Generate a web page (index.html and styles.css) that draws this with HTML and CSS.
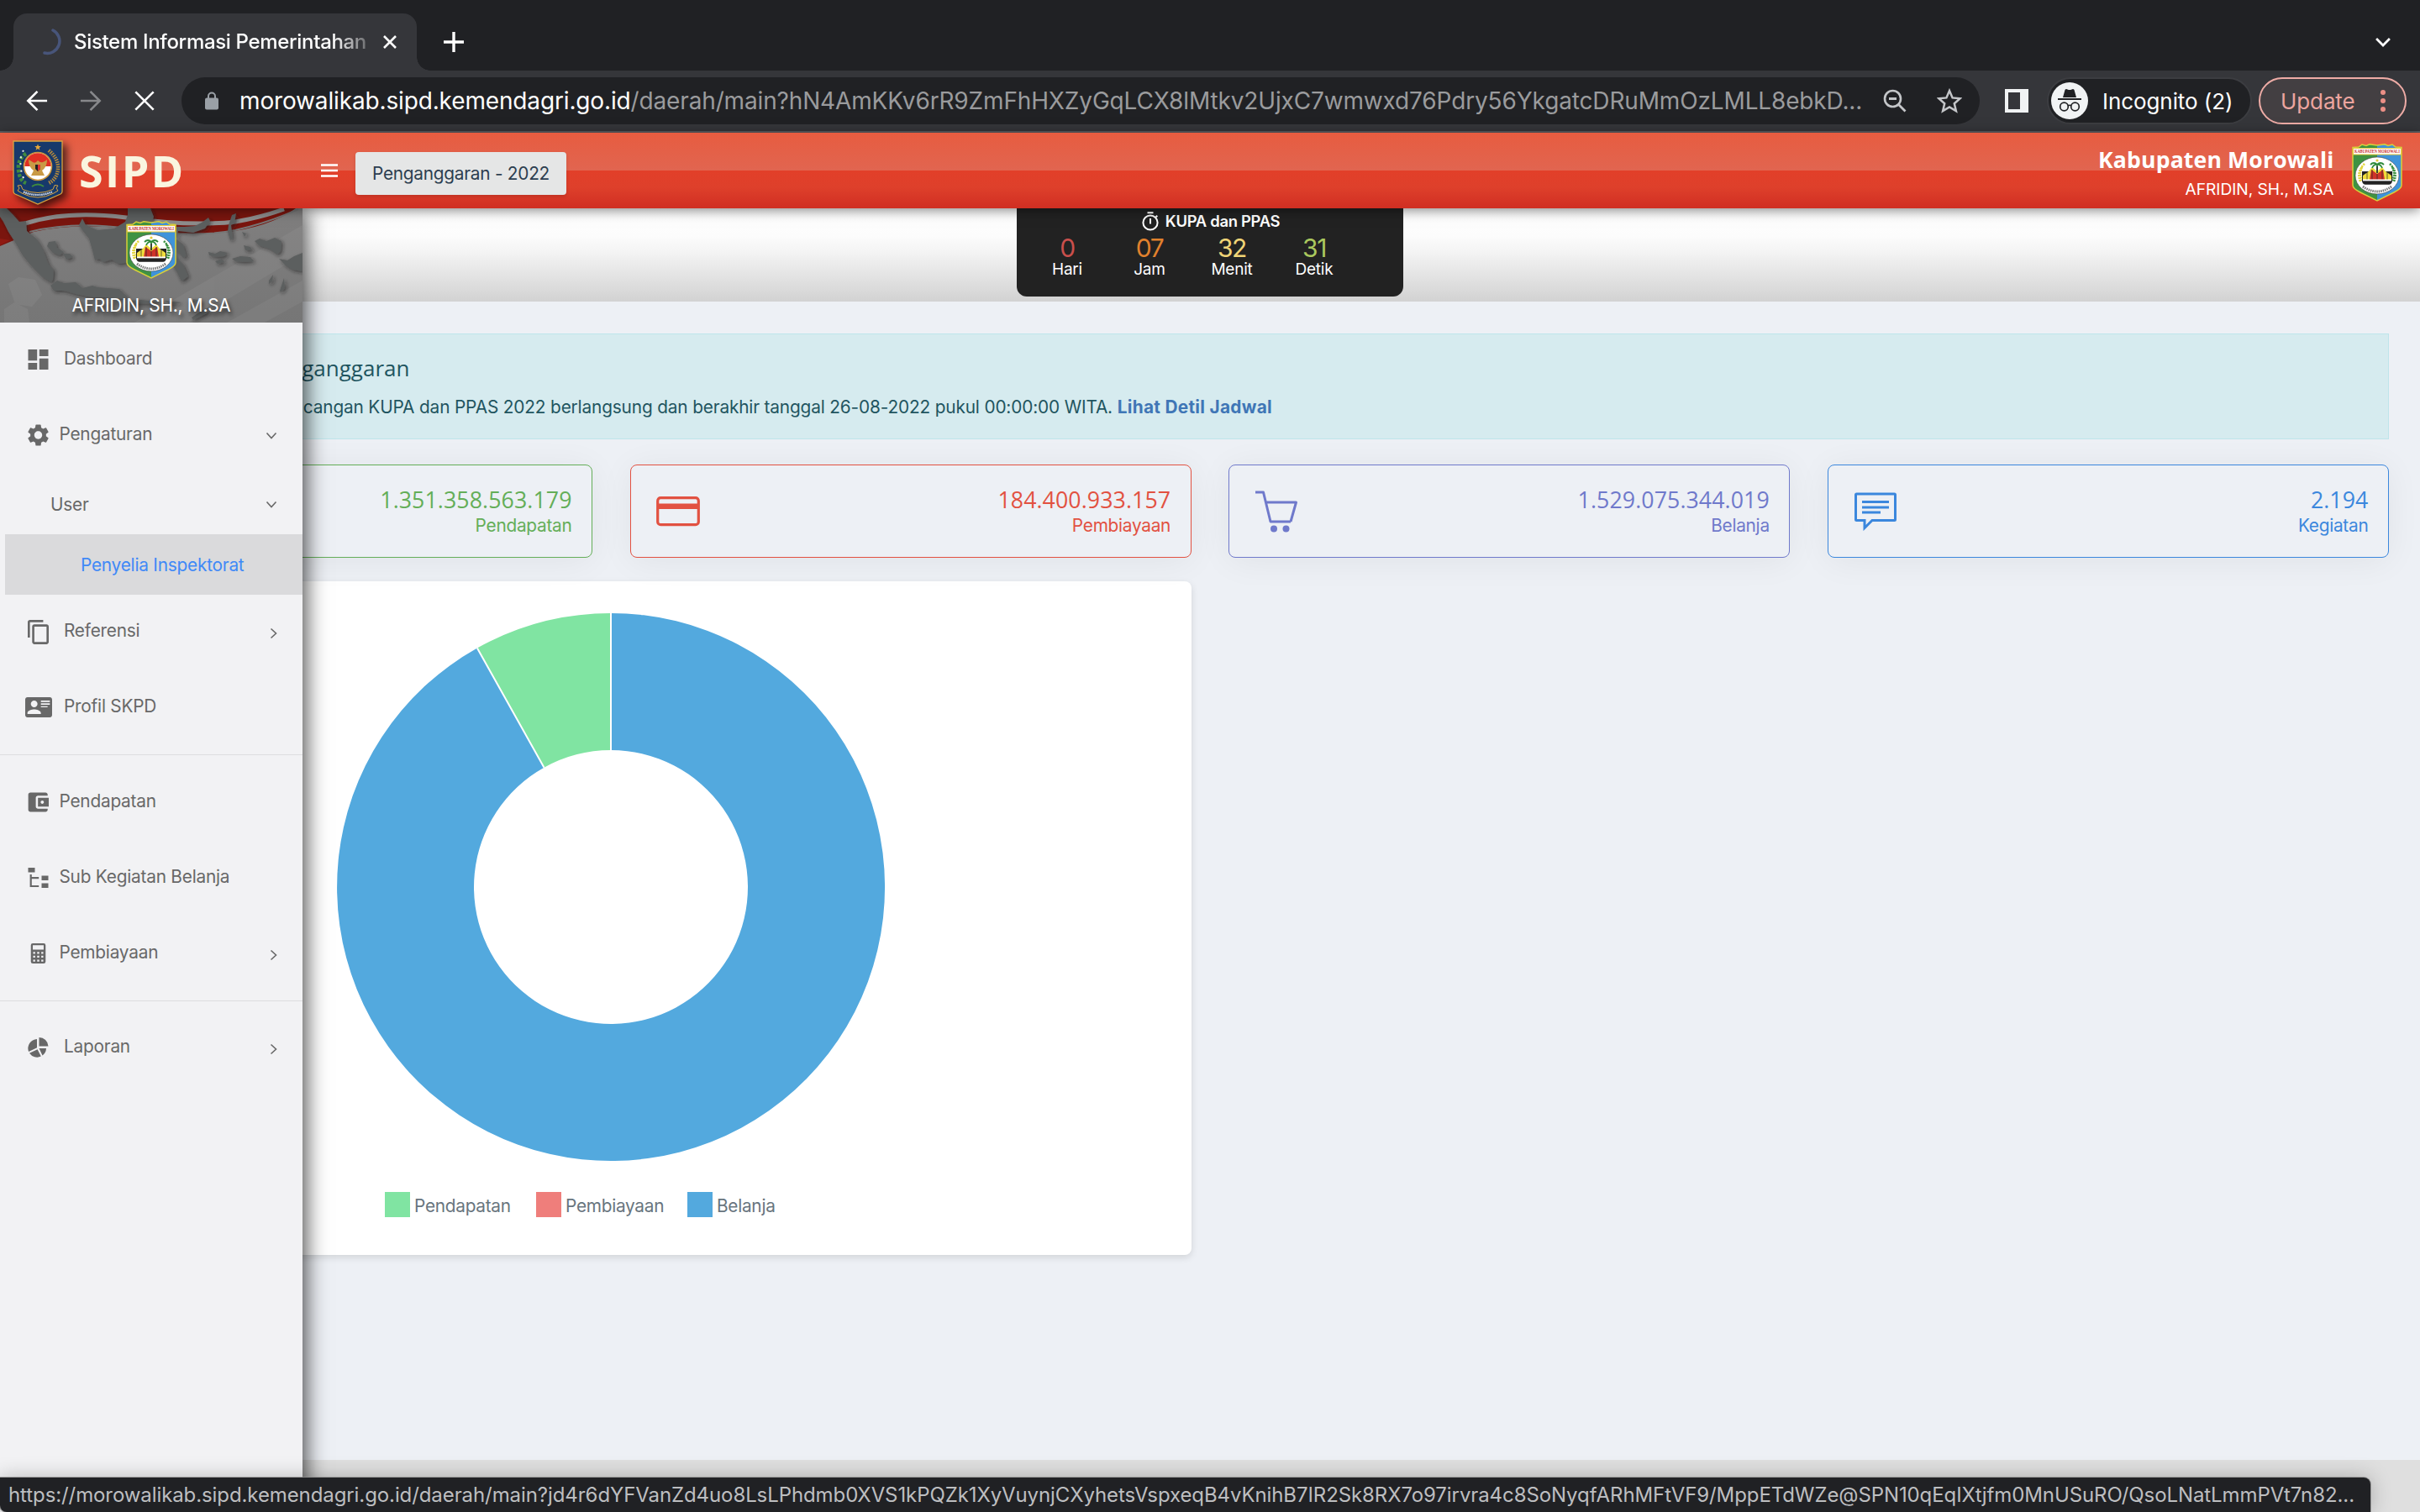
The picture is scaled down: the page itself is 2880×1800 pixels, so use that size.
FILE: index.html
```html
<!DOCTYPE html>
<html lang="id">
<head>
<meta charset="utf-8">
<title>Sistem Informasi Pemerintahan</title>
<link rel="stylesheet" href="styles.css">
</head>
<body>
<svg class="defs" aria-hidden="true">
  <symbol id="crest" viewBox="0 0 60 69">
    <path d="M1 4.500 8 4l4-3 5 1.500 4-1.800 9 1.300 9-1.300 4 1.800 5-1.500 4 3 7 .5v45c0 3-4 6-9 8.500L30 68 10 58C5 55.500 1 52.500 1 49.500z" fill="#3f9243"/>
    <path d="M30 2l9-1.300 4 1.800 5-1.500 4 3 7 .5v45c0 3-4 6-9 8.500L30 68z" fill="#3f93da"/>
    <path d="M1 4.500 8 4l4-3 5 1.500 4-1.800 9 1.300 9-1.300 4 1.800 5-1.500 4 3 7 .5v45c0 3-4 6-9 8.500L30 68 10 58C5 55.500 1 52.500 1 49.500z" fill="none" stroke="#d8cf3a" stroke-width="1.500"/>
    <path d="M1.500 5.500h57V13h-57z" fill="#fff" stroke="#e9c93a"/>
    <text x="30" y="11.300" text-anchor="middle" textLength="54" lengthAdjust="spacingAndGlyphs" font-family="Liberation Serif, serif" font-weight="700" font-size="5.600" fill="#c8302c">KABUPATEN MOROWALI</text>
    <ellipse cx="30" cy="38" rx="26" ry="22" fill="#fff" stroke="#444" stroke-width=".6"/>
    <path d="M15 24q-10 10-5 21M12 28q-4 8 0 16" fill="none" stroke="#e2d53b" stroke-width="2.500" stroke-dasharray="2 1"/>
    <path d="M45 24q10 10 5 21M48 28q4 8 0 16" fill="none" stroke="#3f9243" stroke-width="2.500" stroke-dasharray="2 1"/>
    <path d="M12 33h36v12H12z" fill="#222"/>
    <path d="M13 43v-5l7-5 4-5 6 5 6-5 4 5 7 5v5z" fill="#f0dc3c"/>
    <path d="M21 43l2-12 3 2 4 3 4-3 3-2 2 12z" fill="#cf3328"/>
    <path d="M18 33v10M24 31v12M30 36v7M36 31v12M42 33v10" stroke="#222" stroke-width=".7"/>
    <path d="M13 42.500h34v2H13z" fill="#fff"/>
    <path d="M12 44.800h36q-1 4-4 4H16q-3 0-4-4z" fill="#222"/>
    <path d="M30 35V24M30 25q-4-4-8 0M30 25q4-4 8 0M30 25q-4-1-6 4M30 25q4-1 6 4" fill="none" stroke="#2f8a3a" stroke-width="1.800"/>
    <path d="M30 35V27" stroke="#333" stroke-width="1.600"/>
    <circle cx="30" cy="20" r="1.600" fill="#e2c93b"/>
    <path d="M13 51q17 12 34 0" fill="none" stroke="#777" stroke-width="3" stroke-dasharray="1.500 1"/>
  </symbol>
  <symbol id="chev-down" viewBox="0 0 14 10"><path d="M1.500 1.500 7 7.500l5.500-6" fill="none" stroke="currentColor" stroke-width="1.600"/></symbol>
  <symbol id="chev-right" viewBox="0 0 10 14"><path d="M1.500 1.500 7.500 7l-6 5.500" fill="none" stroke="currentColor" stroke-width="1.600"/></symbol>
</svg>

<div class="tabstrip">
  <div class="tab">
    <svg class="spinner" viewBox="0 0 32 32"><path d="M17 2A14.500 14.500 0 0 1 7 29" fill="none" stroke="#48557a" stroke-width="3.500" stroke-linecap="round"/></svg>
    <span class="tab-title">Sistem Informasi Pemerintahan</span>
    <svg class="tab-close" viewBox="0 0 16 16"><path d="M1 1l14 14M15 1 1 15" stroke="#fff" stroke-width="2.600"/></svg>
  </div>
  <svg class="new-tab" viewBox="0 0 24 24"><path d="M12 0v24M0 12h24" stroke="#fff" stroke-width="3.400"/></svg>
  <svg class="tab-menu" viewBox="0 0 26 16"><path d="M1.500 1.500 13 13 24.500 1.500" fill="none" stroke="#fff" stroke-width="4"/></svg>
</div>

<div class="toolbar">
  <svg class="nav" viewBox="0 0 28 28"><path d="M27 14H3M14.500 2 2.500 14l12 12" fill="none" stroke="#fff" stroke-width="2.800"/></svg>
  <svg class="nav" viewBox="0 0 28 28"><path d="M1 14h24M13.500 2l12 12-12 12" fill="none" stroke="#87888b" stroke-width="2.800"/></svg>
  <svg class="nav" viewBox="0 0 28 28"><path d="M2.500 2.500l23 23M25.500 2.500l-23 23" stroke="#fff" stroke-width="2.800"/></svg>
  <div class="omnibox">
    <svg class="lock" viewBox="0 0 16 22"><path d="M4 9V5.500a4 4 0 0 1 8 0V9" fill="none" stroke="#9aa0a6" stroke-width="2"/><rect y="7.500" width="16" height="14" rx="2" fill="#9aa0a6"/></svg>
    <span class="url"><span class="host">morowalikab.sipd.kemendagri.go.id</span>/daerah/main?hN4AmKKv6rR9ZmFhHXZyGqLCX8lMtkv2UjxC7wmwxd76Pdry56YkgatcDRuMmOzLMLL8ebkD...</span>
    <svg class="mag" viewBox="0 0 28 28"><circle cx="11.500" cy="11.500" r="9.500" fill="none" stroke="#c4c6c9" stroke-width="2.600"/><path d="M18.500 18.500l8 8M7 11.500h9" stroke="#c4c6c9" stroke-width="2.800"/></svg>
    <svg class="star" viewBox="0 0 30 30"><path d="M15 3l3.600 8.400 9.100.8-6.900 6 2.100 8.900L15 22.400l-7.900 4.700 2.100-8.900-6.900-6 9.100-.8z" fill="none" stroke="#c4c6c9" stroke-width="2.500"/></svg>
  </div>
  <svg class="panel" viewBox="0 0 28 28"><path d="M0 0h28v28H0zM4 4v20h14V4z" fill="#f1f3f4" fill-rule="evenodd"/></svg>
  <div class="incognito">
    <svg viewBox="0 0 44 44"><circle cx="22" cy="22" r="22" fill="#f1f3f4"/><path d="M16.500 9q1-1.500 3-.5 2.500 1 5 0 2-1 3 .5L30 18H14z" fill="#202124"/><path d="M8 20h28" stroke="#202124" stroke-width="2"/><g fill="none" stroke="#202124" stroke-width="1.700"><circle cx="15.500" cy="29" r="4.800"/><circle cx="28.500" cy="29" r="4.800"/><path d="M20 28q2-1.500 4 0"/></g></svg>
    <span>Incognito (2)</span>
  </div>
  <div class="update">
    <span>Update</span>
    <svg viewBox="0 0 6 28"><circle cx="3" cy="4" r="3"/><circle cx="3" cy="14" r="3"/><circle cx="3" cy="24" r="3"/></svg>
  </div>
</div>

<header class="appbar">
  <svg class="emblem" viewBox="0 0 60 77">
    <path d="M1 1h58v60q0 2-2 3L30 76 3 64q-2-1-2-3z" fill="#17396b" stroke="#d9a441" stroke-width="1.300"/>
    <path d="M30 4.500l1 2.600h2.800l-2.200 1.800.8 2.800L30 10l-2.400 1.700.8-2.800-2.200-1.800H29z" fill="#e5a93a"/>
    <path d="M16 16Q6 22 7 35t9 16" fill="none" stroke="#3f8a3f" stroke-width="4.500" stroke-dasharray="3.500 2"/>
    <path d="M13 12q-5 8-3 22 1 10 6 15" fill="none" stroke="#e9eee9" stroke-width="2" stroke-dasharray="2 6"/>
    <path d="M43 12q12 10 11 22T43 51" fill="none" stroke="#b58a3c" stroke-width="4.500" stroke-dasharray="1.600 1.200"/>
    <circle cx="30" cy="31" r="16.500" fill="#fff" stroke="#c9973e" stroke-width="1.600"/>
    <path d="M14.300 31a15.700 15.700 0 0 1 31.400 0z" fill="#e02f24"/>
    <path d="M30 24q-3 4-6 2t-5-3q0 9 6 13l-3 6h16l-3-6q6-4 6-13-2 2-5 3t-6-2z" fill="#c99a45"/>
    <path d="M27 29h6v5l-3 3-3-3z" fill="#222"/><path d="M30 29h3v5l-3 3z" fill="#d33"/>
    <path d="M23 55q7-5 14 0" fill="none" stroke="#3f8a3f" stroke-width="2"/>
    <path d="M6 54l4-.5 2 5q18 8 36 0l2-5 4 .5-2 3 2 3-5 3q-19 10-38 0l-5-3 2-3z" fill="#17396b" stroke="#d9a441"/>
    <path d="M13 61.500q17 7 34 0" fill="none" stroke="#dfe5ee" stroke-width="2.200" stroke-dasharray="1.600 .8"/>
  </svg>
  <span class="brand">SIPD</span>
  <svg class="burger" viewBox="0 0 20 16"><path d="M0 1.500h20M0 8h20M0 14.500h20" stroke="#fff" stroke-width="2.400"/></svg>
  <button class="year" type="button">Penganggaran - 2022</button>
  <div class="who">
    <div class="region">Kabupaten Morowali</div>
    <div class="person">AFRIDIN, SH., M.SA</div>
  </div>
  <svg class="crest-top"><use href="#crest"/></svg>
</header>

<div class="page">
  <div class="subbar">
    <div class="countdown">
      <div class="cd-title">
        <svg viewBox="0 0 20 23"><path d="M6.500 1.200h7" stroke="#fff" stroke-width="2.200"/><circle cx="10" cy="13" r="8.600" fill="none" stroke="#fff" stroke-width="2"/><path d="M10 8v6.500M16.500 6.500l1.800-1.800" stroke="#fff" stroke-width="2"/></svg>
        <span>KUPA dan PPAS</span>
      </div>
      <div class="cd-grid">
        <div class="cd days"><b>0</b><span>Hari</span></div>
        <div class="cd hours"><b>07</b><span>Jam</span></div>
        <div class="cd mins"><b>32</b><span>Menit</span></div>
        <div class="cd secs"><b>31</b><span>Detik</span></div>
      </div>
    </div>
  </div>

  <main class="content">
    <section class="alert">
      <h4>Penganggaran</h4>
      <p>Rancangan KUPA dan PPAS 2022 berlangsung dan berakhir tanggal 26-08-2022 pukul 00:00:00 WITA. <a>Lihat Detil Jadwal</a></p>
    </section>
    <section class="stats">
      <article class="stat green"><span></span><div><strong>1.351.358.563.179</strong><small>Pendapatan</small></div></article>
      <article class="stat red">
        <svg width="52" height="36" viewBox="0 0 52 36"><rect x="1.700" y="1.700" width="48.600" height="32" rx="3.500" fill="none" stroke="currentColor" stroke-width="3.200"/><path d="M1 8.500h50v6.500H1z" fill="currentColor"/></svg>
        <div><strong>184.400.933.157</strong><small>Pembiayaan</small></div>
      </article>
      <article class="stat violet">
        <svg width="52" height="50" viewBox="0 0 52 50"><path d="M1 2h9.500l8.500 35h24M12.500 14h37L43 37" fill="none" stroke="currentColor" stroke-width="3" stroke-linejoin="round"/><circle cx="23" cy="45.500" r="4" fill="currentColor"/><circle cx="37.500" cy="45.500" r="4" fill="currentColor"/></svg>
        <div><strong>1.529.075.344.019</strong><small>Belanja</small></div>
      </article>
      <article class="stat blue">
        <svg width="52" height="46" viewBox="0 0 52 46"><path d="M3.500 2h45q1 0 1 1v29.500q0 1-1 1H22L13 42.500v-9H3.500q-1 0-1-1V3q0-1 1-1z" fill="none" stroke="currentColor" stroke-width="3"/><path d="M10 11.500h32M10 18h32M10 24h22" stroke="currentColor" stroke-width="3"/></svg>
        <div><strong>2.194</strong><small>Kegiatan</small></div>
      </article>
    </section>
    <section class="chart">
      <svg class="donut" viewBox="-327 -327 654 654">
        <path d="M0-326A326 326 0 1 1-159.100-284.500L-79.500-142.300A163 163 0 1 0 0-163z" fill="#53a9de"/>
        <path d="M-159.100-284.500A326 326 0 0 1 0-326V-163A163 163 0 0 0-79.500-142.300z" fill="#80e4a2"/>
        <path d="M-159.100-284.500-79.500-142.300M0-327V-162" stroke="#fff" stroke-width="2"/>
      </svg>
      <ul class="legend">
        <li class="l-green"><span>Pendapatan</span></li>
        <li class="l-red"><span>Pembiayaan</span></li>
        <li class="l-blue"><span>Belanja</span></li>
      </ul>
    </section>
  </main>
  <footer class="footer"></footer>

  <aside class="sidebar">
    <div class="banner">
      <svg class="map" viewBox="0 0 360 136" preserveAspectRatio="none">
        <defs>
          <linearGradient id="gr" x1="0" y1="0" x2="0" y2="1"><stop offset="0" stop-color="#807f7f"/><stop offset="1" stop-color="#767676"/></linearGradient>
          <filter id="sh" x="-5%" y="-5%" width="115%" height="115%"><feDropShadow dx="2" dy="2" stdDeviation="2" flood-color="#222" flood-opacity=".6"/></filter>
        </defs>
        <path d="M0 0h360v136H0z" fill="url(#gr)"/>
        <g fill="#fff" opacity=".05"><path d="M160 136 360 20v35L225 136zM270 136l90-50v25l-45 25zM10 90l12-8 20 3 8 18-12 14-20-3z"/><path d="M5 120l12-8 16 8 2 16H5z"/></g>
        <path d="M0 0h352Q316 26 250 30 195 32 150 24 90 17 40 28L0 45z" fill="#7a150e"/>
        <path d="M30 18Q80 2 150 11q75 11 130 5 30-5 58-15" fill="none" stroke="#8e8d8d" stroke-width="5"/>
        <path d="M35 28Q90 15 150 24q80 12 130 2 40-9 75-25" fill="none" stroke="#777" stroke-width="2"/>
        <path d="M0 36l12 2L0 44z" fill="#8f1a12"/>
        <g fill="#5c5e5e" filter="url(#sh)">
          <path d="M0 0h8l8 8 7 8 8-1 1 12 12 10 8 14 6 16 6 6-1 12-2 3-10-6-14-14-10-12-8-14-9-14-6-12-4-6z"/>
          <path d="M94 20l4-8 4 8 14 6 20-2 13-8 3-8V0h27l4 10-4 12 6 10-8 12-4 16-10 8-8-4-14 2-8-5-10 3-5-4-5 2-3-12-4-14-8-10z"/>
          <path d="M60 92l8-6 8 3 14-1 8 7 12-3 6 2 26 2 4 5 6 4-4 3-22-2-16 0-20-4-14-4-12 0z"/>
          <path d="M210 22l10 0 12-1 8-4 8-6 2 4-6 9-14 5-18-2-2 10 8 6 4 14-4 2-7-9-2-3 1 12 8 8 6 14-8 6-6-12-4-6z"/>
          <path d="M58 40l8-1 2 8 8 5-5 4-8-3-7-8zM75 54l8 0 4 4-8 3zM272 20l4-12 5-2-2 12-4 2 2 16-3 2-3-10zM248 52l8 2 6-3 9 2-4 4-10 1-8-2zM256 63l8-3 3 4-8 2zM276 60l10-3 12 1 4 5-12 1-10-1zM303 39l6-3 8 3 10-4 8 4-1 12-4 4-10-7-12-4zM332 60l10 2 8-5 10-4v22l-12-2-8-5zM288 28l5 2-2 4zM290 44l8 2 2 4-8 0zM196 110l20 2-12 3zM230 108l10 2-12 3zM228 130l12-8 10-5-4 8-16 8zM320 86l5-7-1 8-4 3zM333 98l5-15 1 12-5 5zM154 110l14-1 18 2-6 3-22-1z"/>
        </g>
      </svg>
      <svg class="crest-side"><use href="#crest"/></svg>
      <div class="side-name">AFRIDIN, SH., M.SA</div>
    </div>
    <nav class="menu">
      <a class="item first wide"><svg class="ic" viewBox="0 0 24 24"><path d="M0 0h10.700v13.300H0zM0 16h10.700v8H0zM13.300 0H24v8H13.300zM13.300 10.700H24V24H13.300z" fill="currentColor"/></svg><span>Dashboard</span></a>
      <a class="item"><svg class="ic big" viewBox="2 2 20 20"><path fill="currentColor" d="M19.140 12.940c.04-.3.060-.61.060-.94 0-.32-.02-.64-.07-.94l2.030-1.580c.18-.14.230-.41.120-.61l-1.920-3.320c-.12-.22-.37-.29-.59-.22l-2.390.96c-.5-.38-1.030-.7-1.620-.94l-.36-2.540c-.04-.24-.24-.41-.48-.41h-3.840c-.24 0-.43.170-.47.410l-.36 2.540c-.59.240-1.130.570-1.620.940l-2.390-.96c-.22-.08-.47 0-.59.220L2.740 8.870c-.12.210-.08.470.120.610l2.030 1.580c-.05.300-.09.630-.09.940s.02.640.070.940l-2.030 1.580c-.18.140-.23.410-.12.610l1.920 3.320c.12.220.370.290.590.220l2.390-.96c.5.380 1.030.7 1.620.940l.36 2.540c.05.240.240.410.480.410h3.840c.24 0 .44-.17.470-.41l.36-2.540c.59-.24 1.130-.56 1.620-.94l2.390.96c.22.080.470 0 .59-.22l1.920-3.320c.12-.22.070-.47-.12-.61l-2.010-1.580zM12 15.600c-1.980 0-3.600-1.620-3.600-3.600s1.620-3.600 3.600-3.600 3.600 1.620 3.600 3.600-1.620 3.600-3.600 3.600z"/></svg><span>Pengaturan</span><svg class="down"><use href="#chev-down"/></svg></a>
      <a class="item sub"><span>User</span><svg class="down"><use href="#chev-down"/></svg></a>
      <a class="item leaf"><span>Penyelia Inspektorat</span></a>
      <a class="item first wide"><svg class="ic tall" viewBox="2 1 19 22"><path fill="currentColor" d="M16 1H4c-1.100 0-2 .9-2 2v14h2V3h12V1zm3 4H8c-1.100 0-2 .9-2 2v14c0 1.100.9 2 2 2h11c1.100 0 2-.9 2-2V7c0-1.100-.9-2-2-2zm0 16H8V7h11v14z"/></svg><span>Referensi</span><svg class="right"><use href="#chev-right"/></svg></a>
      <a class="item wide"><svg class="ic card" viewBox="0 3 24 18"><path fill="currentColor" fill-rule="evenodd" d="M22 3H2C.9 3 0 3.900 0 5v14c0 1.100.9 2 2 2h20c1.100 0 1.990-.9 1.990-2L24 5c0-1.100-.9-2-2-2zM8 6c1.660 0 3 1.340 3 3s-1.340 3-3 3-3-1.340-3-3 1.340-3 3-3zm6 12H2v-1c0-2 4-3.100 6-3.100s6 1.100 6 3.100v1zM14 6h8v1.300h-8zM14 8.500h8v1.300h-8zM14 11h6v1h-6z"/></svg><span>Profil SKPD</span></a>
      <hr>
      <a class="item"><svg class="ic" viewBox="2.500 3 19.500 18"><path fill="currentColor" fill-rule="evenodd" d="M21 18v1c0 1.100-.9 2-2 2H5c-1.110 0-2-.9-2-2V5c0-1.100.890-2 2-2h14c1.100 0 2 .9 2 2v1h-9c-1.110 0-2 .9-2 2v8c0 1.100.890 2 2 2h9zm-9-2h10V8H12v8zm4-2.500c-.83 0-1.500-.67-1.500-1.500s.67-1.500 1.500-1.500 1.500.67 1.500 1.500-.67 1.500-1.500 1.500z"/></svg><span>Pendapatan</span></a>
      <a class="item"><svg class="ic" viewBox="0 0 24 24"><path d="M0 0h8v5.500H0zM16 9.500h8V15h-8zM16 18.500h8V24h-8z" fill="currentColor"/><path d="M3.200 8v14h9.500M3.200 12.200h9.500" fill="none" stroke="currentColor" stroke-width="2.200"/></svg><span>Sub Kegiatan Belanja</span></a>
      <a class="item"><svg class="ic" viewBox="0 0 24 26"><path fill="currentColor" fill-rule="evenodd" d="M5 0h14q2.500 0 2.500 2.500v21Q21.500 26 19 26H5q-2.500 0-2.500-2.500v-21Q2.500 0 5 0zM5 2.500V8h14V2.500zM5.500 11v2.500H8V11zm5.200 0v2.500h2.600V11zM16 11v2.500h2.500V11zM5.500 16v2.500H8V16zm5.200 0v2.500h2.600V16zM16 16v2.500h2.500V16zM5.500 21v2.500H8V21zm5.200 0v2.500h2.600V21zM16 21v2.500h2.500V21z"/></svg><span>Pembiayaan</span><svg class="right"><use href="#chev-right"/></svg></a>
      <hr>
      <a class="item wide last"><svg class="ic" viewBox="0 0 24 24"><path d="M13 0a11 11 0 0 1 11 10.500H13zM10.500 2v10.300L.6 17A11 11 0 0 1 10.500 2zM1.500 18.700l9.600-4.500 4.200 8.400A11 11 0 0 1 1.500 18.700zM13 13h8.500a11 11 0 0 1-4.500 8.500z" fill="currentColor"/></svg><span>Laporan</span><svg class="right"><use href="#chev-right"/></svg></a>
    </nav>
  </aside>
  <div class="status">https://morowalikab.sipd.kemendagri.go.id/daerah/main?jd4r6dYFVanZd4uo8LsLPhdmb0XVS1kPQZk1XyVuynjCXyhetsVspxeqB4vKnihB7IR2Sk8RX7o97irvra4c8SoNyqfARhMFtVF9/MppETdWZe@SPN10qEqIXtjfm0MnUSuRO/QsoLNatLmmPVt7n82...</div>
</div>
</body>
</html>
```
FILE: styles.css
```css
* { box-sizing: border-box; }
html, body { margin: 0; }
body {
  width: 2880px;
  height: 1800px;
  overflow: hidden;
  display: flex;
  flex-direction: column;
  background: #edf0f5;
  font-family: Inter, "Liberation Sans", sans-serif;
  font-size: 20.8px;
}
svg { display: block; flex: none; }
.defs { position: absolute; width: 0; height: 0; }

/* browser tab strip */
.tabstrip { height: 84px; flex: none; background: #202124; display: flex; align-items: center; padding: 16px 31px 0 16px; }
.tab { position: relative; width: 480px; height: 68px; background: #35363a; border-radius: 16px 16px 0 0; display: flex; align-items: center; padding: 0 24px 0 30px; }
.tab::before, .tab::after { content: ""; position: absolute; bottom: 0; width: 16px; height: 16px; }
.tab::before { left: -16px; background: radial-gradient(circle at 0 0, transparent 15.500px, #35363a 16px); }
.tab::after { right: -16px; background: radial-gradient(circle at 100% 0, transparent 15.500px, #35363a 16px); }
.spinner { width: 32px; height: 32px; }
.tab-title { width: 350px; margin-left: 10px; overflow: hidden; white-space: nowrap; font-size: 24px; font-weight: 500; letter-spacing: -.0134em; line-height: 32px; color: #fff; -webkit-mask-image: linear-gradient(90deg, #000 88%, rgba(0,0,0,.25)); mask-image: linear-gradient(90deg, #000 88%, rgba(0,0,0,.25)); }
.tab-close { width: 16px; height: 16px; margin-left: auto; }
.new-tab { width: 24px; height: 24px; margin-left: 32px; }
.tab-menu { width: 18px; height: 11px; margin-left: auto; margin-right: 4px; }

/* browser toolbar */
.toolbar { height: 74px; flex: none; background: #35363a; border-bottom: 2px solid #5b5e62; display: flex; align-items: center; padding: 0 16px 0 31px; }
.nav { width: 26px; height: 26px; margin-right: 38px; }
.omnibox { width: 2140px; height: 56px; margin-left: -7px; background: #202124; border-radius: 28px; display: flex; align-items: center; padding: 0 21px 0 28px; }
.lock { width: 16px; height: 22px; }
.url { margin-left: 25px; font-size: 28px; line-height: 40px; letter-spacing: -.0052em; color: #9a9b9d; white-space: nowrap; flex: 1; }
.host { color: #fff; }
.mag { width: 28px; height: 28px; margin-right: 36px; }
.star { width: 30px; height: 30px; }
.panel { width: 28px; height: 28px; margin-left: 30px; }
.incognito { width: 244px; height: 56px; margin-left: 22px; background: #202124; border: 2px solid #3c3d41; border-radius: 28px; display: flex; align-items: center; padding-left: 3px; font-size: 26px; letter-spacing: -.003em; color: #fff; white-space: nowrap; }
.incognito svg { width: 44px; height: 44px; margin-right: 17px; }
.update { width: 176px; height: 56px; margin-left: auto; background: #433f42; border: 2px solid #eeaca6; border-radius: 28px; display: flex; align-items: center; padding: 0 23px 0 24px; justify-content: space-between; font-size: 26px; letter-spacing: -.004em; color: #eda59f; }
.update svg { width: 6px; height: 28px; fill: #ec8f86; }

/* application header */
.appbar { position: relative; z-index: 3; height: 90px; flex: none; display: flex; align-items: center; padding: 0 21px 0 15px; background: linear-gradient(#e75c40, #e16550 50%, #e23f29 50%, #de402b 72%, #d02e22); box-shadow: 0 2px 14px rgba(0,0,0,.5); color: #fff; }
.emblem { width: 60px; height: 77px; margin-top: 4px; filter: drop-shadow(5px 5px 5px rgba(0,0,0,.65)); }
.brand { margin-left: 19px; width: 288px; font: 700 52px/60px "Open Sans", "Noto Sans", sans-serif; letter-spacing: 2.400px; color: #faf5df; }
.burger { width: 20px; height: 16px; }
.year { margin: 6px 0 0 21px; width: 251px; height: 51px; border: 0; border-radius: 4px; background: #e5e6e6; color: #2c3e50; font: inherit; letter-spacing: -.0119em; white-space: nowrap; padding: 0; box-shadow: 0 2px 4px rgba(0,0,0,.12); }
.who { margin-left: auto; margin-right: 21.500px; text-align: right; }
.region { font: 700 26.600px/36px "Open Sans", "Noto Sans", sans-serif; letter-spacing: .0058em; padding-top: 6px; }
.person { font-size: 19.200px; line-height: 32px; letter-spacing: -.0026em; padding-top: 1px; }
.crest-top { width: 60px; height: 69px; margin-top: 4px; }

/* page under the header */
.page { position: relative; flex: 1; display: flex; flex-direction: column; letter-spacing: -.0105em; }
.subbar { height: 111px; background: linear-gradient(#fff, #fcfcfc 30%, #f3f3f3 48%, #d2d2d2); display: flex; justify-content: center; align-items: flex-start; }
.countdown { width: 460px; height: 105px; background: #222; border-radius: 0 0 12px 12px; color: #fff; padding-top: 4px; }
.cd-title { display: flex; justify-content: center; align-items: center; gap: 8px; height: 22px; font-size: 18.400px; font-weight: 600; letter-spacing: -.0155em; padding-left: 2px; }
.cd-title svg { width: 20px; height: 23px; }
.cd-grid { display: grid; grid-template-columns: repeat(4, 98px); padding-left: 11px; text-align: center; }
.cd { display: flex; flex-direction: column; font-size: 19px; line-height: 22px; }
.cd b { font-size: 30px; font-weight: 400; line-height: 30px; margin-top: 6px; letter-spacing: -.045em; }
.days b { color: #c94f4c; }
.hours b { color: #e0812d; }
.mins b { color: #f0d477; }
.secs b { color: #aac85e; }

.content { padding: 38px 37px 0; flex: 1; }
.alert { height: 126px; background: #d6ebef; border: 1px solid #bee5eb; color: #1f5560; padding: 22px 0 0 275px; }
.alert h4 { margin: 0; font: 400 26px/36px "Open Sans", "Noto Sans", sans-serif; letter-spacing: 0; }
.alert p { margin: 14px 0 0 11px; line-height: 30px; white-space: nowrap; letter-spacing: -.0072em; }
.alert a { font-weight: 700; letter-spacing: .0145em; color: #3f76b6; }
.stats { margin-top: 30px; display: grid; grid-template-columns: repeat(4, 668px); justify-content: space-between; }
.stat { height: 111px; border: 1px solid; border-radius: 8px; display: flex; justify-content: space-between; align-items: center; padding: 0 23.500px 0 30px; box-shadow: 0 4px 40px rgba(0,0,0,.06); background: #edf0f5; text-align: right; }
.stat div { display: flex; flex-direction: column; }
.stat strong { font: 400 26.700px/34px "Open Sans", "Noto Sans", sans-serif; letter-spacing: .004em; }
.stat small { font-size: 20.800px; line-height: 28px; letter-spacing: -.0125em; }
.green { color: #64ae58; }
.red { color: #e25141; }
.violet { color: #6f79cb; }
.blue { color: #3b87dd; }
.chart { margin-top: 28px; width: 1381px; height: 802px; background: #fff; border-radius: 8px; box-shadow: 0 3px 8px rgba(0,0,0,.12); padding: 37px 0 0 363px; }
.donut { width: 654px; height: 654px; }
.legend { list-style: none; margin: 36px 0 0 58px; padding: 0; display: flex; color: #68757e; letter-spacing: -.013em; }
.legend li { width: 180px; display: flex; align-items: center; height: 30px; }
.legend li::before { content: ""; width: 30px; height: 30px; margin-right: 5px; }
.legend span { padding-top: 3px; }
.l-green::before { background: #80e4a2; }
.l-red::before { background: #ef7e7b; }
.l-blue::before { background: #53a9de; }
.footer { height: 62px; background: #dfdfdf; }

/* sidebar drawer, floats over the page */
.sidebar { position: absolute; left: 0; top: 0; bottom: 0; width: 360px; background: #f2f2f4; box-shadow: 4px 0 24px rgba(0,0,0,.7); color: #686868; }
.banner { position: relative; height: 136px; padding-top: 15px; overflow: hidden; }
.map { position: absolute; inset: 0; width: 360px; height: 136px; }
.crest-side { position: relative; width: 60px; height: 69px; margin: 0 auto; }
.side-name { position: relative; margin-top: 18.500px; text-align: center; line-height: 26px; color: #fff; text-shadow: 2px 4px 5px rgba(0,0,0,.7); }
.item { display: flex; align-items: center; height: 90px; padding: 0 29px 1px 33px; line-height: 28px; }
.item.first { height: 88px; padding-bottom: 3px; }
.item.last { padding-bottom: 3px; }
.ic { width: 25px; height: 24px; margin: 3px 12.500px 0 0; }
.wide .ic { margin-right: 18px; }
.ic.big { width: 27px; height: 26px; margin: 3px 11.500px 0 -1px; }
.ic.tall { height: 29px; }
.wide .ic.card { width: 32px; margin: 3px 14px 0 -3px; }
.right { margin-left: auto; margin-top: 7px; width: 10px; height: 14px; }
.down { margin: 4px 1px 0 auto; width: 14px; height: 10px; }
.item.sub { height: 74px; padding-left: 60px; padding-bottom: 0; padding-top: 3px; }
.item.sub .down { margin-top: 0; }
.item.leaf { height: 72px; margin-left: 6px; padding-left: 90px; padding-bottom: 0; padding-top: 1px; background: #dadadc; color: #4089f7; }
.menu hr { margin: 12px 0 10px; border: 0; height: 1px; background: #dddddf; }

/* link preview bubble */
.status { position: absolute; left: 0; bottom: 0; width: 2821px; height: 41px; background: #202124; border-radius: 0 8px 0 8px; box-shadow: 0 0 0 1px rgba(140,140,140,.8), 0 0 24px rgba(0,0,0,.25); color: #bdbec0; font-size: 24px; line-height: 41px; letter-spacing: -.0039em; padding-left: 10px; white-space: nowrap; }
```
